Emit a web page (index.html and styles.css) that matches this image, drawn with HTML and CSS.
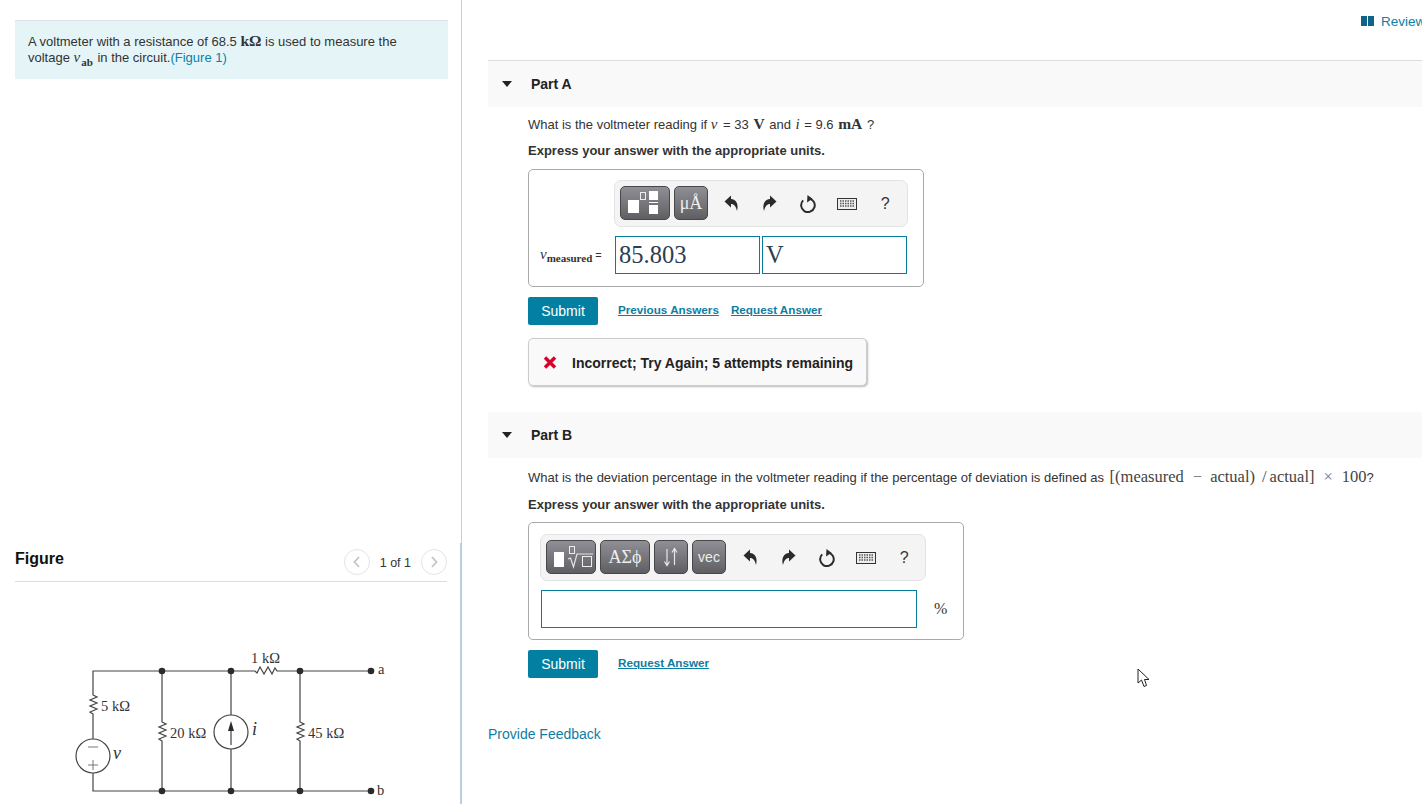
FILE: index.html
```html
<!DOCTYPE html>
<html lang="en">
<head>
<meta charset="utf-8">
<title>Voltmeter problem</title>
<link rel="stylesheet" href="styles.css">
</head>
<body>
<div class="page">
  <aside class="left">
    <div class="top">
      <div class="prompt">A voltmeter with a resistance of 68.5 <b class="m">kΩ</b> is used to measure the voltage <i class="m">v</i><sub class="m">ab</sub> in the circuit.<a class="flink">(Figure 1)</a></div>
    </div>
    <section class="figure">
      <div class="fighead">
        <h2>Figure</h2>
        <div class="pager">
          <span class="circ"><svg width="10" height="14" viewBox="0 0 10 14"><polyline points="7,2 2.5,7 7,12"/></svg></span>
          <span class="count">1 of 1</span>
          <span class="circ"><svg width="10" height="14" viewBox="0 0 10 14"><polyline points="3,2 7.5,7 3,12"/></svg></span>
        </div>
      </div>
      <svg class="circuit" width="460" height="164" viewBox="0 640 460 164">
        <g class="wire">
          <path d="M371 671H277l-2 -3 -3 6 -4 -7 -4 7 -4 -7 -3 6 -2 -2H93V695l4 2 -7 3 7 3 -7 3 7 3 -7 3 3 2V739"/>
          <path d="M93 773V791H371"/>
          <path d="M162 671V722l4 2 -7 3 7 3 -7 3 7 3 -7 3 3 2V791"/>
          <path d="M231 671V715M231 749V791M231 745V727"/>
          <path d="M300 671V722l4 2 -7 3 7 3 -7 3 7 3 -7 3 3 2V791"/>
          <circle cx="93" cy="756" r="17"/>
          <circle cx="231" cy="732" r="17"/>
          <path class="thin" d="M88 747H98M88 765H98M93 760V770"/>
        </g>
        <path class="fill" d="M231 721L234 731H228Z"/>
        <g class="fill">
          <circle cx="162" cy="671" r="3.3"/><circle cx="231" cy="671" r="3.3"/><circle cx="300" cy="671" r="3.3"/><circle cx="371" cy="671" r="3.3"/>
          <circle cx="162" cy="791" r="3.3"/><circle cx="231" cy="791" r="3.3"/><circle cx="300" cy="791" r="3.3"/><circle cx="371" cy="791" r="3.3"/>
        </g>
        <g class="clabel">
          <text x="251" y="663">1 kΩ</text>
          <text x="101" y="711">5 kΩ</text>
          <text x="170" y="738">20 kΩ</text>
          <text x="308" y="738">45 kΩ</text>
          <text x="378" y="674">a</text>
          <text x="377" y="795">b</text>
          <text class="it" x="113" y="759">v</text>
          <text class="it" x="252" y="735">i</text>
        </g>
      </svg>
    </section>
  </aside>

  <main class="right">
    <div class="topbar">
      <svg width="13" height="10" viewBox="0 0 13 10"><path class="book" d="M0 0H6V10H0ZM7 0H13V10H7Z"/></svg>
      <a class="review">Review</a>
    </div>

    <section class="part parta">
      <header class="parthead"><span class="tri"></span><h3>Part A</h3></header>
      <div class="partbody">
        <p class="q q1">What is the voltmeter reading if <i class="m mv">v</i> = 33 <b class="m big">V</b> and <i class="m mi">i</i> = 9.6 <b class="m big">mA</b> ?</p>
        <p class="x">Express your answer with the appropriate units.</p>
        <div class="answer a1">
          <div class="tools t1">
            <button class="tb w50"><svg width="48" height="32" viewBox="0 0 48 32"><path class="ico" d="M7 13H18V26H7ZM28 4H37V13H28ZM28 15H37V16H28ZM28 18H37V27H28Z"/><rect class="ico-o" x="19.5" y="5.5" width="5" height="7"/></svg></button>
            <button class="tb w34 serif">μÅ</button>
            <div class="icons i1">
              <span class="ic"><svg width="15" height="17" viewBox="0 0 15 17"><path class="k" d="M0.5 6.500L7 0.500V4C12 4 15 9 13 16C12 11.500 10 9 7 9V12.500Z"/></svg></span>
              <span class="ic"><svg width="15" height="17" viewBox="0 0 15 17"><path class="k" d="M14.500 6.500L8 0.500V4C3 4 0 9 2 16C3 11.500 5 9 8 9V12.500Z"/></svg></span>
              <span class="ic"><svg width="18" height="18" viewBox="0 0 18 18"><path class="rs" d="M9.500 3.500A6.800 6.800 0 1 1 4.200 5.400"/><path class="k" d="M8.500 0L13.500 3.800L8 7.500Z"/></svg></span>
              <span class="ic"><svg width="20" height="12" viewBox="0 0 20 12"><rect class="kb" x="0.500" y="0.500" width="19" height="11"/><path class="kd" d="M3 3H17M3 5.500H17M3 8H17"/></svg></span>
              <span class="ic qm">?</span>
            </div>
          </div>
          <div class="inrow">
            <span class="lab"><i class="m vm">v</i><sub class="m">measured</sub> =</span>
            <span class="inp w145">85.803</span>
            <span class="inp w145">V</span>
          </div>
        </div>
        <div class="actions">
          <button class="submit">Submit</button>
          <a class="alink">Previous Answers</a>
          <a class="alink">Request Answer</a>
        </div>
        <div class="feedback">
          <svg width="14" height="13" viewBox="0 0 14 13"><path class="xm" d="M2 1.500L12 11.500M12 1.500L2 11.500"/></svg>
          <span class="fbtext">Incorrect; Try Again; 5 attempts remaining</span>
        </div>
      </div>
    </section>

    <section class="part partb">
      <header class="parthead"><span class="tri"></span><h3>Part B</h3></header>
      <div class="partbody">
        <p class="q q2">What is the deviation percentage in the voltmeter reading if the percentage of deviation is defined as <span class="m eq">[(measured<span class="op">−</span>actual)<span class="sl">/</span>actual]<span class="op2">×</span>100</span>?</p>
        <p class="x x2">Express your answer with the appropriate units.</p>
        <div class="answer a2">
          <div class="tools t2">
            <button class="tb w50"><svg width="48" height="32" viewBox="0 0 48 32"><path class="ico" d="M7 11H17V26H7Z"/><rect class="ico-o" x="22.500" y="5.500" width="5" height="7"/><path class="ico-l" d="M21 18L23.500 17L26.500 26L30 13H46"/><rect class="ico-o" x="35.500" y="15.500" width="9" height="10"/></svg></button>
            <button class="tb w50 serif">ΑΣϕ</button>
            <button class="tb w34"><svg width="24" height="24" viewBox="0 0 24 24"><path class="ico-l" d="M8 4V20M5.500 16.500L8 20.500L10.500 16.500M15.500 20V4M13 7.500L15.500 3.500L18 7.500"/></svg></button>
            <button class="tb w34 vec">vec</button>
            <div class="icons i2">
              <span class="ic"><svg width="15" height="17" viewBox="0 0 15 17"><path class="k" d="M0.5 6.500L7 0.500V4C12 4 15 9 13 16C12 11.500 10 9 7 9V12.500Z"/></svg></span>
              <span class="ic"><svg width="15" height="17" viewBox="0 0 15 17"><path class="k" d="M14.500 6.500L8 0.500V4C3 4 0 9 2 16C3 11.500 5 9 8 9V12.500Z"/></svg></span>
              <span class="ic"><svg width="18" height="18" viewBox="0 0 18 18"><path class="rs" d="M9.500 3.500A6.800 6.800 0 1 1 4.200 5.400"/><path class="k" d="M8.500 0L13.500 3.800L8 7.500Z"/></svg></span>
              <span class="ic"><svg width="20" height="12" viewBox="0 0 20 12"><rect class="kb" x="0.500" y="0.500" width="19" height="11"/><path class="kd" d="M3 3H17M3 5.500H17M3 8H17"/></svg></span>
              <span class="ic qm">?</span>
            </div>
          </div>
          <div class="inrow2">
            <span class="inp w376"></span>
            <span class="pct">%</span>
          </div>
        </div>
        <div class="actions">
          <button class="submit">Submit</button>
          <a class="alink">Request Answer</a>
        </div>
      </div>
    </section>
    <a class="provide">Provide Feedback</a>
  </main>
  <svg class="cursor" width="14" height="20" viewBox="0 0 14 20"><path d="M1 1V15L4.500 12L7 18.500L9.500 17.500L7.500 11.500H12Z"/></svg>
</div>
</body>
</html>
```

FILE: styles.css
```css
* { box-sizing: border-box; }
html, body { margin: 0; padding: 0; background: #fff; }
body { font-family: "Liberation Sans", Arial, sans-serif; font-size: 14px; color: #333; }
.page { position: relative; display: flex; width: 1422px; height: 804px; overflow: hidden; }
h2, h3, p { margin: 0; }
.m { font-family: "Liberation Serif", "DejaVu Serif", serif; line-height: 0; }
b.m { font-size: 15.5px; }
i.m { font-size: 15px; }
sub.m { font-size: 11px; line-height: 0; font-weight: bold; }

.left { width: 462px; flex: none; display: flex; flex-direction: column; }
.top { height: 543px; border-right: 1px solid #c9ced3; padding-top: 20px; }
.prompt { margin-left: 15px; width: 433px; height: 59px; padding: 13px 13px 13px; background: #e5f5f7; border-top: 1px solid #dde3e5; font-size: 13px; line-height: 16px; }
.prompt i.m { margin-right: 1px; }
.prompt sub.m { margin-right: 1px; }
.flink { color: #0b7fa5; }
.figure { flex: 1; border-right: 2px solid #b9cee0; padding-left: 15px; }
.fighead { width: 432px; height: 39px; border-bottom: 1px solid #ddd; display: flex; justify-content: space-between; align-items: center; }
.fighead h2 { font-size: 16px; font-weight: bold; color: #111; margin-top: -7px; }
.pager { display: flex; align-items: center; gap: 10px; font-size: 12.5px; margin-top: -1px; }
.count { margin-top: 3px; }
.circ { width: 26px; height: 26px; border: 1px solid #e4e4e4; border-radius: 50%; display: flex; align-items: center; justify-content: center; }
.circ polyline { fill: none; stroke: #c4c4c4; stroke-width: 1.8; }
.circuit { display: block; margin: 58px 0 0 -15px; }
.wire { fill: none; stroke: #444; stroke-width: 1.2; }
.wire .thin { stroke: #777; stroke-width: 1; }
.fill { fill: #2b2b2b; stroke: none; }
.clabel text { font-family: "Liberation Serif", serif; font-size: 14.5px; fill: #333; }
.clabel .it { font-style: italic; font-size: 18px; }

.right { flex: 1; min-width: 0; overflow: hidden; }
.topbar { height: 60px; padding: 16px 0 0 899px; display: flex; gap: 7px; align-items: flex-start; white-space: nowrap; }
.topbar svg { flex: none; }
.book { fill: #0e6585; }
.review { color: #0b7fa5; font-size: 13.5px; line-height: 11px; }
.part { margin-left: 26px; }
.parthead { height: 46px; background: #f9f9f9; display: flex; align-items: center; padding-left: 14px; }
.parta .parthead { height: 47px; border-top: 1px solid #ddd; }
.partb { margin-top: 26px; }
.tri { width: 0; height: 0; border-left: 5.5px solid transparent; border-right: 5.5px solid transparent; border-top: 6px solid #222; }
.parthead h3 { font-size: 14px; font-weight: bold; color: #222; margin-left: 19px; }
.partbody { padding-left: 40px; }
.q { font-size: 13px; line-height: 16px; white-space: nowrap; }
.q1 { margin-top: 10px; }
.q2 { margin-top: 12px; }
.big { font-size: 15.5px; margin: 0 1px; }
.mv { margin-right: 2px; }
.mi { margin: 0 1px; }
.x { font-size: 13px; font-weight: bold; line-height: 16px; margin-top: 10px; }
.x2 { margin-top: 11px; }
.eq { font-size: 16.5px; margin-left: 2px; color: #444; }
.op { margin: 0 8px 0 9px; color: #777; }
.sl { margin: 0 3px 0 7px; }
.op2 { margin: 0 9px; color: #777; }

.answer { border: 1px solid #aaa; border-radius: 5px; height: 118px; padding-left: 11px; }
.a1 { width: 396px; margin-top: 10px; padding-top: 10px; }
.a2 { width: 436px; margin-top: 9px; padding-top: 11px; }
.tools { height: 47px; background: #f4f4f4; border: 1px solid #e3e3e3; border-radius: 7px; padding: 5px; display: flex; gap: 4px; }
.t1 { width: 294px; margin-left: 74px; }
.t2 { width: 386px; }
.tb { flex: none; height: 34px; padding: 0; border: 1px solid #48484c; border-radius: 5px; background: linear-gradient(#8f8f95, #5f5f63); color: #eee; font-family: "Liberation Sans", sans-serif; display: flex; align-items: center; justify-content: center; }
.w50 { width: 50px; }
.w34 { width: 34px; }
.serif { font-family: "Liberation Serif", serif; font-size: 18px; }
.vec { font-size: 14px; padding-bottom: 1px; }
.ico { fill: #fff; }
.ico-o { fill: none; stroke: #eee; stroke-width: 1; }
.ico-l { fill: none; stroke: #e6e6e6; stroke-width: 1.2; }
.icons { flex: none; display: flex; align-items: center; }
.i1 { margin-left: 0; }
.i2 { margin-left: 1px; }
.ic { flex: none; width: 38.5px; display: flex; align-items: center; justify-content: center; }
.qm { font-size: 16px; color: #333; }
.k { fill: #2b2b2b; }
.rs { fill: none; stroke: #2b2b2b; stroke-width: 2; }
.kb { fill: #eee; stroke: #333; stroke-width: 1; }
.kd { fill: none; stroke: #555; stroke-width: 1.4; stroke-dasharray: 1.5 1; }
.inrow { display: flex; align-items: center; margin-top: 9px; gap: 2px; }
.lab { width: 73px; flex: none; font-size: 11px; white-space: nowrap; }
.inp { height: 38px; border: 1px solid #047c9e; background: #fff; font-family: "Liberation Serif", serif; font-size: 24.5px; line-height: 36px; padding-left: 3px; color: #2c3e50; }
.w145 { width: 145px; }
.w376 { width: 376px; }
.inrow2 { display: flex; align-items: center; margin: 9px 0 0 1px; gap: 17px; }
.pct { font-family: "Liberation Serif", serif; font-size: 16px; }

.actions { display: flex; align-items: center; margin-top: 10px; }
.submit { width: 70px; height: 28px; padding: 0; border: 0; border-radius: 2px; background: #027fa1; color: #fff; font-family: "Liberation Sans", sans-serif; font-size: 14px; margin-right: 20px; }
.alink { color: #0f7da3; font-size: 11.7px; font-weight: bold; text-decoration: underline; margin-right: 12px; margin-top: -3px; }
.feedback { width: 339px; height: 48px; margin-top: 13px; background: #f9f9f9; border: 1px solid #ccc; border-radius: 5px; box-shadow: 1px 1px 2px #bbb; display: flex; align-items: center; gap: 15px; padding-left: 14px; font-size: 14px; font-weight: bold; color: #222; white-space: nowrap; }
.fbtext { margin-top: 2px; }
.xm { fill: none; stroke: #d9002a; stroke-width: 3.5; }
.provide { display: block; margin: 48px 0 0 26px; color: #0f7da3; font-size: 14px; line-height: 16px; }
.cursor { position: absolute; left: 1137px; top: 668px; }
.cursor path { fill: #fff; stroke: #222; stroke-width: 1; }
```
